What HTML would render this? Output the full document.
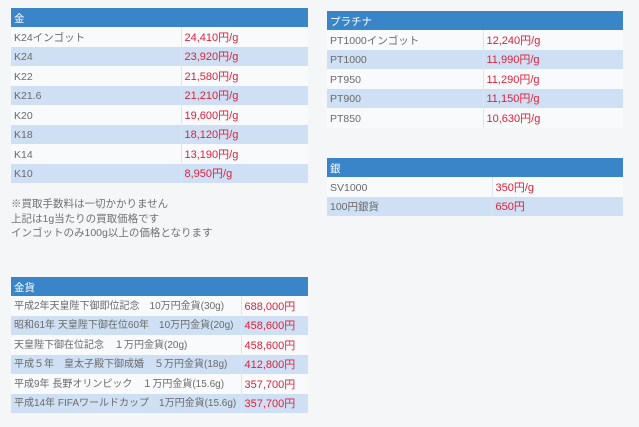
<!DOCTYPE html>
<html><head><meta charset="utf-8"><style>
body{margin:0;background:#f4f6f7;font-family:"Liberation Sans","Noto Sans CJK JP",sans-serif;font-size:10.5px;color:#6a6a6a;width:639px;height:427px;overflow:hidden;position:relative}
table{position:absolute;border-collapse:collapse;table-layout:fixed}
th{background:#3a84c8;color:#fff;text-align:left;font-weight:normal;height:19px;padding:2px 0 0 3px;box-sizing:border-box;font-size:10.5px;vertical-align:middle;line-height:12px}
td{height:19.5px;padding:2px 0 0 3px;box-sizing:border-box;white-space:nowrap;overflow:hidden;border-right:1px solid #dce6f0;vertical-align:middle;line-height:12px}
td+td{color:#e0203a;border-right:none;font-size:11px}
tr:nth-child(odd) td{background:#cfe0f5}
tr:nth-child(even) td{background:#f8fafb}
.k td:first-child{font-size:10px}
.n{position:absolute;left:11px;top:197px;line-height:14.5px;font-size:10.5px;color:#707070}
</style></head><body>
<table style="left:11px;top:8px;width:297px">
<colgroup><col style="width:170px"><col></colgroup>
<tr><th colspan="2">金</th></tr>
<tr><td>K24インゴット</td><td>24,410円/g</td></tr>
<tr><td>K24</td><td>23,920円/g</td></tr>
<tr><td>K22</td><td>21,580円/g</td></tr>
<tr><td>K21.6</td><td>21,210円/g</td></tr>
<tr><td>K20</td><td>19,600円/g</td></tr>
<tr><td>K18</td><td>18,120円/g</td></tr>
<tr><td>K14</td><td>13,190円/g</td></tr>
<tr><td>K10</td><td>8,950円/g</td></tr>
</table>
<div class="n">※買取手数料は一切かかりません<br>上記は1g当たりの買取価格です<br>インゴットのみ100g以上の価格となります</div>
<table style="left:327px;top:11px;width:296px">
<colgroup><col style="width:156px"><col></colgroup>
<tr><th colspan="2">プラチナ</th></tr>
<tr><td>PT1000インゴット</td><td>12,240円/g</td></tr>
<tr><td>PT1000</td><td>11,990円/g</td></tr>
<tr><td>PT950</td><td>11,290円/g</td></tr>
<tr><td>PT900</td><td>11,150円/g</td></tr>
<tr><td>PT850</td><td>10,630円/g</td></tr>
</table>
<table style="left:327px;top:158px;width:296px">
<colgroup><col style="width:165px"><col></colgroup>
<tr><th colspan="2">銀</th></tr>
<tr><td>SV1000</td><td>350円/g</td></tr>
<tr><td>100円銀貨</td><td>650円</td></tr>
</table>
<table class="k" style="left:11px;top:277px;width:297px">
<colgroup><col style="width:230px"><col></colgroup>
<tr><th colspan="2">金貨</th></tr>
<tr><td>平成2年天皇陛下御即位記念　10万円金貨(30g)</td><td>688,000円</td></tr>
<tr><td>昭和61年 天皇陛下御在位60年　10万円金貨(20g)</td><td>458,600円</td></tr>
<tr><td>天皇陛下御在位記念　１万円金貨(20g)</td><td>458,600円</td></tr>
<tr><td>平成５年　皇太子殿下御成婚　５万円金貨(18g)</td><td>412,800円</td></tr>
<tr><td>平成9年 長野オリンピック　１万円金貨(15.6g)</td><td>357,700円</td></tr>
<tr><td>平成14年 FIFAワールドカップ　1万円金貨(15.6g)</td><td>357,700円</td></tr>
</table>
</body></html>
